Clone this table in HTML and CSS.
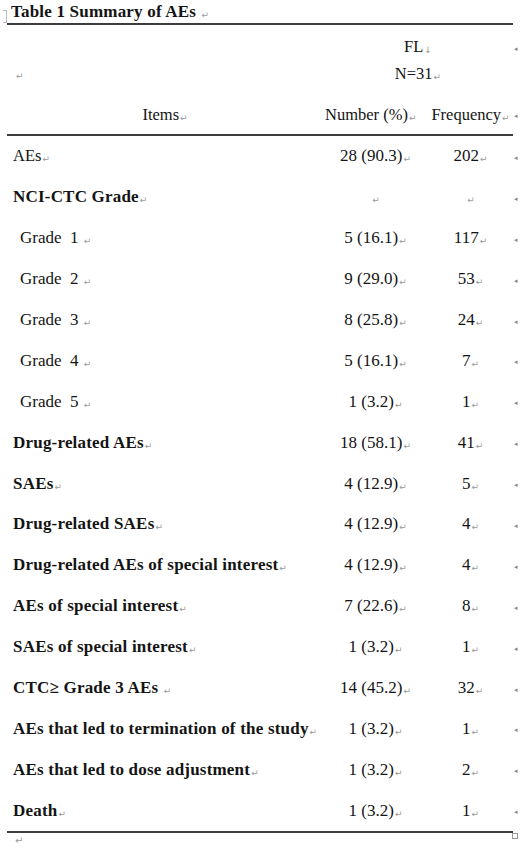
FILE: index.html
```html
<!DOCTYPE html>
<html>
<head>
<meta charset="utf-8">
<link rel="stylesheet" href="styles.css">
</head>
<body>
<div class="page">
  <div class="title-line">
    <span class="bracket"></span>
    <span class="title">Table 1 Summary of AEs <span class="pm">↵</span></span>
  </div>
  <div class="rule"></div>
  <div class="head">
    <div class="head-row1">
      <div class="c-label h-blank"><span class="pm">↵</span></div>
      <div class="c-span">
        <div class="hl">FL<span class="pm">↓</span></div>
        <div class="hl">N=31<span class="pm">↵</span></div>
      </div>
      <div class="c-mark top"><span class="em">◂</span></div>
    </div>
    <div class="head-row2">
      <div class="c-label center">Items<span class="pm">↵</span></div>
      <div class="c-num hnum">Number (%)<span class="pm">↵</span></div>
      <div class="c-freq">Frequency<span class="pm">↵</span></div>
      <div class="c-mark"><span class="em">◂</span></div>
    </div>
  </div>
  <div class="rule"></div>
  <div class="body">
    <div class="row"><div class="c-label">AEs<span class="pm">↵</span></div><div class="c-num">28 (90.3)<span class="pm">↵</span></div><div class="c-freq">202<span class="pm">↵</span></div><div class="c-mark"><span class="em">◂</span></div></div>
    <div class="row"><div class="c-label b">NCI-CTC Grade<span class="pm">↵</span></div><div class="c-num"><span class="pm">↵</span></div><div class="c-freq"><span class="pm">↵</span></div><div class="c-mark"><span class="em">◂</span></div></div>
    <div class="row"><div class="c-label sub">Grade&nbsp; 1 <span class="pm">↵</span></div><div class="c-num">5 (16.1)<span class="pm">↵</span></div><div class="c-freq">117<span class="pm">↵</span></div><div class="c-mark"><span class="em">◂</span></div></div>
    <div class="row"><div class="c-label sub">Grade&nbsp; 2 <span class="pm">↵</span></div><div class="c-num">9 (29.0)<span class="pm">↵</span></div><div class="c-freq">53<span class="pm">↵</span></div><div class="c-mark"><span class="em">◂</span></div></div>
    <div class="row"><div class="c-label sub">Grade&nbsp; 3 <span class="pm">↵</span></div><div class="c-num">8 (25.8)<span class="pm">↵</span></div><div class="c-freq">24<span class="pm">↵</span></div><div class="c-mark"><span class="em">◂</span></div></div>
    <div class="row"><div class="c-label sub">Grade&nbsp; 4 <span class="pm">↵</span></div><div class="c-num">5 (16.1)<span class="pm">↵</span></div><div class="c-freq">7<span class="pm">↵</span></div><div class="c-mark"><span class="em">◂</span></div></div>
    <div class="row"><div class="c-label sub">Grade&nbsp; 5 <span class="pm">↵</span></div><div class="c-num">1 (3.2)<span class="pm">↵</span></div><div class="c-freq">1<span class="pm">↵</span></div><div class="c-mark"><span class="em">◂</span></div></div>
    <div class="row"><div class="c-label b">Drug-related AEs<span class="pm">↵</span></div><div class="c-num">18 (58.1)<span class="pm">↵</span></div><div class="c-freq">41<span class="pm">↵</span></div><div class="c-mark"><span class="em">◂</span></div></div>
    <div class="row"><div class="c-label b">SAEs<span class="pm">↵</span></div><div class="c-num">4 (12.9)<span class="pm">↵</span></div><div class="c-freq">5<span class="pm">↵</span></div><div class="c-mark"><span class="em">◂</span></div></div>
    <div class="row"><div class="c-label b">Drug-related SAEs<span class="pm">↵</span></div><div class="c-num">4 (12.9)<span class="pm">↵</span></div><div class="c-freq">4<span class="pm">↵</span></div><div class="c-mark"><span class="em">◂</span></div></div>
    <div class="row"><div class="c-label b">Drug-related AEs of special interest<span class="pm">↵</span></div><div class="c-num">4 (12.9)<span class="pm">↵</span></div><div class="c-freq">4<span class="pm">↵</span></div><div class="c-mark"><span class="em">◂</span></div></div>
    <div class="row"><div class="c-label b">AEs of special interest<span class="pm">↵</span></div><div class="c-num">7 (22.6)<span class="pm">↵</span></div><div class="c-freq">8<span class="pm">↵</span></div><div class="c-mark"><span class="em">◂</span></div></div>
    <div class="row"><div class="c-label b">SAEs of special interest<span class="pm">↵</span></div><div class="c-num">1 (3.2)<span class="pm">↵</span></div><div class="c-freq">1<span class="pm">↵</span></div><div class="c-mark"><span class="em">◂</span></div></div>
    <div class="row"><div class="c-label b">CTC≥ Grade 3 AEs <span class="pm">↵</span></div><div class="c-num">14 (45.2)<span class="pm">↵</span></div><div class="c-freq">32<span class="pm">↵</span></div><div class="c-mark"><span class="em">◂</span></div></div>
    <div class="row"><div class="c-label b">AEs that led to termination of the study<span class="pm">↵</span></div><div class="c-num">1 (3.2)<span class="pm">↵</span></div><div class="c-freq">1<span class="pm">↵</span></div><div class="c-mark"><span class="em">◂</span></div></div>
    <div class="row"><div class="c-label b">AEs that led to dose adjustment<span class="pm">↵</span></div><div class="c-num">1 (3.2)<span class="pm">↵</span></div><div class="c-freq">2<span class="pm">↵</span></div><div class="c-mark"><span class="em">◂</span></div></div>
    <div class="row"><div class="c-label b">Death<span class="pm">↵</span></div><div class="c-num">1 (3.2)<span class="pm">↵</span></div><div class="c-freq">1<span class="pm">↵</span></div><div class="c-mark"><span class="em">◂</span></div></div>
  </div>
  <div class="rule"></div>
  <div class="foot">
    <span class="pm foot-pm">↵</span>
    <span class="handle"></span>
  </div>
</div>
</body>
</html>
```

FILE: styles.css
```css
* { box-sizing: border-box; }
html, body {
  margin: 0;
  padding: 0;
  background: #ffffff;
}
body {
  width: 520px;
  height: 848px;
  overflow: hidden;
  font-family: "Liberation Serif", "Times New Roman", serif;
  color: #141414;
}
.page {
  padding-left: 7px;
}
.title-line {
  height: 23px;
  display: flex;
  align-items: center;
  margin-left: -7px;
}
.bracket {
  width: 4px;
  height: 13px;
  margin: 10px 4px 0 3px;
  border-top: 1px solid #b8b8b8;
  border-right: 1px solid #b8b8b8;
  border-bottom: 1px solid #b8b8b8;
  align-self: flex-start;
}
.title {
  font-weight: bold;
  font-size: 17px;
  letter-spacing: 0.2px;
  padding-top: 1px;
  white-space: nowrap;
}
.rule {
  width: 506px;
  height: 2px;
  background: #3c3c3c;
}
.pm {
  font-family: "DejaVu Sans", sans-serif;
  font-size: 9px;
  color: #9a9a9a;
  font-weight: normal;
  letter-spacing: 0;
  margin-left: 1px;
  vertical-align: -1px;
}
.em {
  font-family: "DejaVu Sans", sans-serif;
  font-size: 7px;
  color: #8a8a8a;
}
.head {
  height: 109px;
  display: flex;
  flex-direction: column;
}
.head-row1 {
  height: 70px;
  display: flex;
}
.head-row2 {
  height: 39px;
  display: flex;
  align-items: center;
  font-size: 16.5px;
}
.c-label {
  width: 316px;
  padding-left: 6px;
  white-space: nowrap;
  font-size: 16.5px;
}
.c-label.center { text-align: center; padding-left: 0; }
.c-label.b {
  font-weight: bold;
  font-size: 17px;
  letter-spacing: 0.2px;
}
.c-label.sub { padding-left: 13px; font-size: 17px; }
.h-blank {
  padding-top: 38px;
  padding-left: 8px;
}
.c-span {
  width: 190px;
  padding-top: 8px;
  text-align: center;
  font-size: 16.5px;
}
.hl {
  height: 27px;
  line-height: 27px;
}
.c-num {
  width: 105px;
  text-align: center;
  white-space: nowrap;
  font-size: 17px;
}
.hnum { font-size: 16.5px; text-align: left; padding-left: 2px; }
.c-freq {
  width: 85px;
  text-align: center;
  white-space: nowrap;
  font-size: 17px;
}
.head-row2 .c-freq { font-size: 16.5px; }
.c-mark {
  width: 7px;
  padding-left: 1px;
  line-height: 10px;
}
.c-mark.top { padding-top: 16px; }
.row {
  height: 40.9px;
  display: flex;
  align-items: center;
}
.foot {
  width: 513px;
  display: flex;
  justify-content: space-between;
  align-items: flex-start;
}
.foot-pm {
  margin-left: 8px;
  margin-top: 2px;
  font-size: 10px;
}
.handle {
  width: 6px;
  height: 6px;
  border: 1px solid #9a9a9a;
  margin-top: 0px;
  margin-right: 2px;
}
```
